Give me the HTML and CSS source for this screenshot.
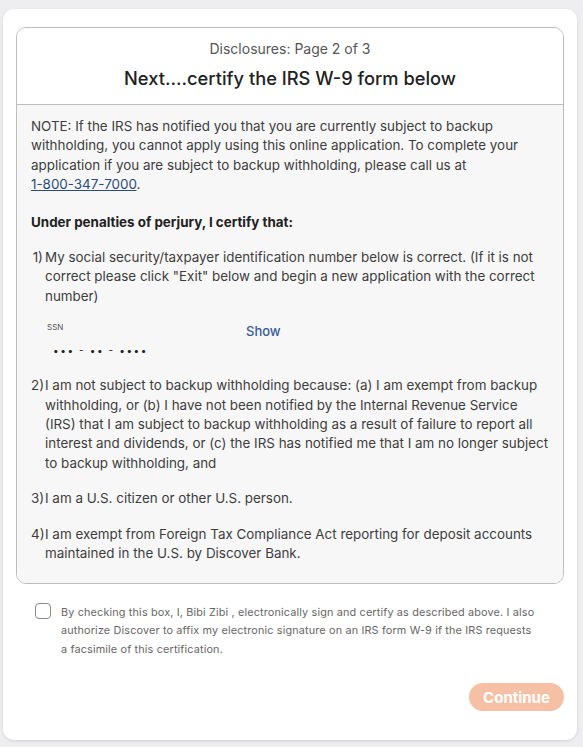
FILE: index.html
```html
<!DOCTYPE html>
<html>
<head>
<meta charset="utf-8">
<link rel="stylesheet" href="styles.css">
</head>
<body>
<div class="card">
  <div class="box">
    <div class="box-head">
      <div class="sub">Disclosures: Page 2 of 3</div>
      <h1 class="title">Next....certify the IRS W-9 form below</h1>
    </div>
    <div class="box-body">
      <p class="note">NOTE: If the IRS has notified you that you are currently subject to backup withholding, you cannot apply using this online application. To complete your application if you are subject to backup withholding, please call us at <a class="phone" href="#">1-800-347-7000</a>.</p>
      <p class="lead">Under penalties of perjury, I certify that:</p>
      <div class="item">
        <span class="num">1)</span>
        <div class="item-text">My social security/taxpayer identification number below is correct. (If it is not correct please click "Exit" below and begin a new application with the correct number)</div>
      </div>
      <div class="ssn">
        <div class="ssn-field">
          <div class="ssn-label">SSN</div>
          <div class="ssn-value">&bull;&bull;&bull; - &bull;&bull; - &bull;&bull;&bull;&bull;</div>
        </div>
        <a class="show" href="#">Show</a>
      </div>
      <div class="item">
        <span class="num">2)</span>
        <div class="item-text">I am not subject to backup withholding because: (a) I am exempt from backup withholding, or (b) I have not been notified by the Internal Revenue Service (IRS) that I am subject to backup withholding as a result of failure to report all interest and dividends, or (c) the IRS has notified me that I am no longer subject to backup withholding, and</div>
      </div>
      <div class="item">
        <span class="num">3)</span>
        <div class="item-text">I am a U.S. citizen or other U.S. person.</div>
      </div>
      <div class="item">
        <span class="num">4)</span>
        <div class="item-text">I am exempt from Foreign Tax Compliance Act reporting for deposit accounts maintained in the U.S. by Discover Bank.</div>
      </div>
    </div>
  </div>
  <label class="agree">
    <span class="check"></span>
    <span class="agree-text">By checking this box, I, Bibi Zibi , electronically sign and certify as described above. I also authorize Discover to affix my electronic signature on an IRS form W-9 if the IRS requests a facsimile of this certification.</span>
  </label>
  <div class="actions">
    <button class="continue" type="button">Continue</button>
  </div>
</div>
</body>
</html>
```

FILE: styles.css
```css
html, body {
  margin: 0;
  padding: 0;
}
body {
  background: #eeeef0;
  font-family: Inter, "Liberation Sans", sans-serif;
  color: #3d3d3d;
  width: 583px;
  height: 747px;
  overflow: hidden;
}
.card {
  margin: 9px 6px 0 3px;
  height: 731px;
  box-sizing: border-box;
  background: #fff;
  border-radius: 11px;
  box-shadow: 0 1px 3px rgba(0,0,0,0.12);
  padding: 18px 13px 0 13px;
}
.box {
  border: 1px solid #bdbdbd;
  border-radius: 10px;
  overflow: hidden;
}
.box-head {
  background: #fff;
  text-align: center;
  padding: 12px 0 14px;
  border-bottom: 1px solid #bdbdbd;
}
.sub {
  font-size: 14px;
  line-height: 18px;
  color: #555;
}
.title {
  margin: 8px 0 0;
  font-size: 18.3px;
  line-height: 24px;
  font-weight: 500;
  color: #222;
}
.box-body {
  background: #f7f7f7;
  padding: 12px 12.5px 19px 14px;
  font-size: 13.4px;
  line-height: 19.4px;
}
.box-body p {
  margin: 0;
}
.phone {
  color: #2b4a7a;
  text-decoration: underline;
  white-space: nowrap;
}
.lead {
  margin-top: 18px !important;
  font-weight: 700;
  color: #222;
}
.item {
  display: flex;
  margin-top: 16px;
}
.num {
  width: 14px;
  flex: none;
  text-align: right;
  padding-right: 2px;
  box-sizing: border-box;
  white-space: nowrap;
}
.item-text {
  flex: 1;
}
.ssn {
  display: flex;
  align-items: flex-start;
  padding: 15px 0 0 16px;
}
.ssn-field {
  width: 199px;
}
.ssn-label {
  font-size: 8px;
  line-height: 12px;
  color: #555;
}
.ssn-value {
  margin-top: 7px;
  font-size: 10px;
  line-height: 20px;
  color: #222;
  padding-left: 6px;
  letter-spacing: 1.6px;
}
.show {
  color: #3a5a94;
  text-decoration: none;
  font-size: 13px;
  font-weight: 500;
  margin-top: 1px;
}
.agree {
  display: flex;
  align-items: flex-start;
  margin: 19px 25px 0 19px;
}
.check {
  width: 14px;
  height: 14px;
  border: 1.5px solid #888;
  border-radius: 4px;
  flex: none;
  margin-right: 10px;
  background: #fff;
}
.agree-text {
  font-size: 10.85px;
  line-height: 18.5px;
  color: #666;
  letter-spacing: 0.15px;
}
.actions {
  display: flex;
  justify-content: flex-end;
  margin-top: 25px;
}
.continue {
  width: 95px;
  height: 28px;
  border: none;
  border-radius: 14px;
  background: #f5c0a4;
  color: #fff;
  font-family: Inter, "Liberation Sans", sans-serif;
  font-size: 15px;
  font-weight: 700;
  padding: 0;
}
```
